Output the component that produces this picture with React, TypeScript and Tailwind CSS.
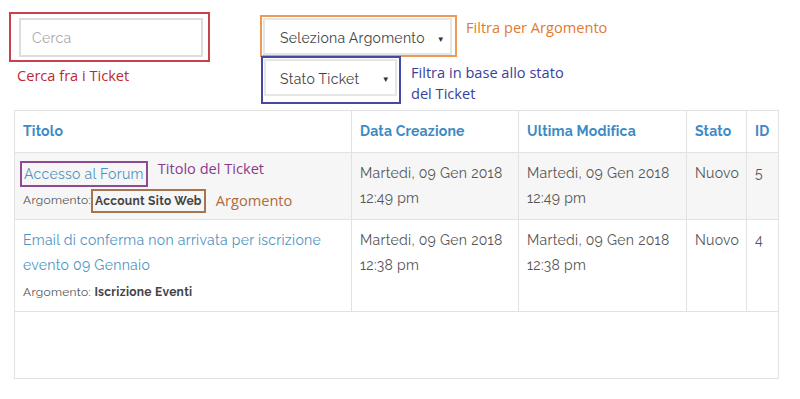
import React from 'react';

const body = "font-['Raleway','Lato',sans-serif]";
const note = "font-['Open_Sans','Noto_Sans',sans-serif] text-[14.6px] leading-[21px] tracking-normal";

const Arrow = () => <span className="text-[8px] text-[#333]">▼</span>;

const App: React.FC = () => {
  return (
    <div className={`w-[800px] h-[399px] bg-white overflow-hidden ${body}`}>
      {/* filtri */}
      <div className="flex h-[110px]">
        <div className="ml-[9px] mt-[12px] flex flex-col">
          <div className="w-[201px] h-[50px] border-2 border-[#c9424a] pl-[8px] pt-[4px]">
            <div className="w-[184px] h-[39px] border-2 border-[#dcdcdc] flex items-center pl-[11px] pt-[2px] text-[14px] text-[#aaa] tracking-[0.3px]">
              Cerca
            </div>
          </div>
          <div className={`${note} mt-[3px] ml-[8px] text-[#c0282f]`}>Cerca fra i Ticket</div>
        </div>
        <div className="ml-[50px] mt-[15px] flex flex-col">
          <div className="flex">
            <div className="w-[197px] h-[42px] border-2 border-[#ec9a55] pl-px pt-px">
              <div className="w-[189px] h-[37px] border-2 border-[#e6e6e6] flex items-center justify-between pl-[15px] pr-[5px] pt-[4px] text-[14px] text-[#444] tracking-[0.3px]">
                <span>Seleziona Argomento</span>
                <Arrow />
              </div>
            </div>
            <div className={`${note} ml-[9px] mt-[2px] text-[#e07b30]`}>Filtra per Argomento</div>
          </div>
          <div className="flex ml-px -mt-px">
            <div className="w-[140px] h-[48px] border-2 border-[#4649a3] pl-px pt-px">
              <div className="w-[133px] h-[37px] border-2 border-[#e6e6e6] flex items-center justify-between pl-[14px] pr-[5px] pt-[3px] text-[14px] text-[#444] tracking-[0.3px]">
                <span>Stato Ticket</span>
                <Arrow />
              </div>
            </div>
            <div className={`${note} ml-[10px] mt-[6px] text-[#3a3f9c]`}>
              Filtra in base allo stato
              <br />
              del Ticket
            </div>
          </div>
        </div>
      </div>

      {/* tabella */}
      <table className="ml-[14px] w-[764px] border-collapse text-[14px] text-[#555] tracking-[0.3px] table-fixed">
        <colgroup>
          <col className="w-[337px]" />
          <col className="w-[167px]" />
          <col className="w-[168px]" />
          <col className="w-[60px]" />
          <col className="w-[32px]" />
        </colgroup>
        <thead>
          <tr className="h-[42px] text-[#3d8ac4] font-bold text-left tracking-[0.2px]">
            <th className="border border-[#e2e2e2] px-[8px]">Titolo</th>
            <th className="border border-[#e2e2e2] px-[8px]">Data Creazione</th>
            <th className="border border-[#e2e2e2] px-[8px]">Ultima Modifica</th>
            <th className="border border-[#e2e2e2] px-[8px]">Stato</th>
            <th className="border border-[#e2e2e2] px-[8px]">ID</th>
          </tr>
        </thead>
        <tbody className="leading-[25px] align-top">
          <tr className="h-[67px] bg-[#f6f6f6]">
            <td className="border border-[#e2e2e2] pl-[5px] pt-[8px]">
              <div className="flex items-start">
                <span className="border-2 border-[#8e4a94] px-[2px] leading-[22px] text-[#4d94c4]">Accesso al Forum</span>
                <span className={`${note} ml-[10px] -mt-[3px] text-[#8b3a8f]`}>Titolo del Ticket</span>
              </div>
              <div className="flex items-center text-[12px] mt-[1px] ml-[3px]">
                <span>Argomento:</span>
                <span className="border-2 border-[#a5754f] px-[2px] leading-[20px] font-bold text-[#444]">Account Sito Web</span>
                <span className={`${note} ml-[10px] text-[#b06a3c]`}>Argomento</span>
              </div>
            </td>
            <td className="border border-[#e2e2e2] px-[8px] pt-[8px]">Martedi, 09 Gen 2018<br />12:49 pm</td>
            <td className="border border-[#e2e2e2] px-[8px] pt-[8px]">Martedi, 09 Gen 2018<br />12:49 pm</td>
            <td className="border border-[#e2e2e2] px-[8px] pt-[8px]">Nuovo</td>
            <td className="border border-[#e2e2e2] px-[8px] pt-[8px]">5</td>
          </tr>
          <tr className="h-[92px]">
            <td className="border border-[#e2e2e2] px-[8px] pt-[8px]">
              <div className="text-[#4d94c4]">Email di conferma non arrivata per iscrizione<br />evento 09 Gennaio</div>
              <div className="text-[12px] mt-[2px]">
                Argomento: <span className="font-bold text-[#444]">Iscrizione Eventi</span>
              </div>
            </td>
            <td className="border border-[#e2e2e2] px-[8px] pt-[8px]">Martedi, 09 Gen 2018<br />12:38 pm</td>
            <td className="border border-[#e2e2e2] px-[8px] pt-[8px]">Martedi, 09 Gen 2018<br />12:38 pm</td>
            <td className="border border-[#e2e2e2] px-[8px] pt-[8px]">Nuovo</td>
            <td className="border border-[#e2e2e2] px-[8px] pt-[8px]">4</td>
          </tr>
          <tr className="h-[67px]">
            <td colSpan={5} className="border border-[#e2e2e2]"></td>
          </tr>
        </tbody>
      </table>
    </div>
  );
};

export default App;
